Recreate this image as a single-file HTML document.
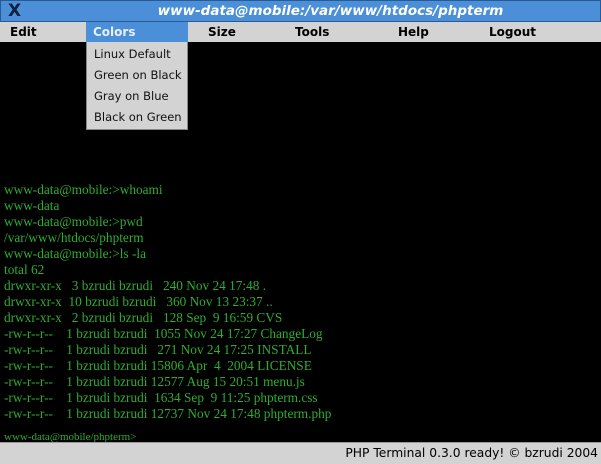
<!DOCTYPE html>
<html><head><style>
*{margin:0;padding:0;box-sizing:border-box}
body{width:601px;height:464px;background:#000;position:relative;overflow:hidden;font-family:"DejaVu Sans",sans-serif}
#title{position:absolute;left:0;top:0;width:601px;height:22px;background:#4a8fd8;border:1px solid #2a5a90}
#title .x{position:absolute;left:7px;top:0px;font:bold 17px "DejaVu Sans",sans-serif;color:#102040}
#title .t{position:absolute;left:0;width:100%;top:2px;text-align:center;padding-left:60px;font:italic bold 13.5px "DejaVu Sans",sans-serif;color:#fff}
#menu{position:absolute;left:0;top:22px;width:601px;height:20px;background:#d3d3d3}
#sel{position:absolute;left:86px;top:22px;width:102px;height:20px;background:#4a8fd8}
#dd{position:absolute;left:86px;top:42px;width:102px;height:88px;background:#d3d3d3;border:1px solid #888;border-top:none}
#dd div{height:21px;padding-left:7px;padding-top:5px;font:11.5px "DejaVu Sans",sans-serif;color:#111}
#term{position:absolute;left:4px;top:182px;font:13.3px "Liberation Serif",serif;color:#2fae2f;line-height:16px;white-space:pre}
#prompt{position:absolute;left:4px;top:431px;font:11px "Liberation Serif",serif;color:#2fae2f}
#status{position:absolute;left:0;top:442px;width:601px;height:22px;background:#d3d3d3;border-top:1px solid #999;text-align:right;padding-right:3px;padding-top:3px;font:12.3px "DejaVu Sans",sans-serif;color:#000}
</style></head><body>
<div id="title"><span class="x">X</span><div class="t">www-data@mobile:/var/www/htdocs/phpterm</div></div>
<div id="menu"></div>
<div id="sel"></div>
<div style="position:absolute;top:22px;left:0;width:601px;height:20px">
<span style="position:absolute;left:10px;top:3px;font:bold 12px 'DejaVu Sans';">Edit</span>
<span style="position:absolute;left:93px;top:3px;font:bold 12px 'DejaVu Sans';color:#e8f0ff">Colors</span>
<span style="position:absolute;left:208px;top:3px;font:bold 12px 'DejaVu Sans';">Size</span>
<span style="position:absolute;left:295px;top:3px;font:bold 12px 'DejaVu Sans';">Tools</span>
<span style="position:absolute;left:398px;top:3px;font:bold 12px 'DejaVu Sans';">Help</span>
<span style="position:absolute;left:489px;top:3px;font:bold 12px 'DejaVu Sans';">Logout</span>
</div>
<div id="dd"><div>Linux Default</div><div>Green on Black</div><div>Gray on Blue</div><div>Black on Green</div></div>
<div id="term">www-data@mobile:&gt;whoami
www-data
www-data@mobile:&gt;pwd
/var/www/htdocs/phpterm
www-data@mobile:&gt;ls -la
total 62
drwxr-xr-x   3 bzrudi bzrudi   240 Nov 24 17:48 .
drwxr-xr-x  10 bzrudi bzrudi   360 Nov 13 23:37 ..
drwxr-xr-x   2 bzrudi bzrudi   128 Sep  9 16:59 CVS
-rw-r--r--    1 bzrudi bzrudi  1055 Nov 24 17:27 ChangeLog
-rw-r--r--    1 bzrudi bzrudi   271 Nov 24 17:25 INSTALL
-rw-r--r--    1 bzrudi bzrudi 15806 Apr  4  2004 LICENSE
-rw-r--r--    1 bzrudi bzrudi 12577 Aug 15 20:51 menu.js
-rw-r--r--    1 bzrudi bzrudi  1634 Sep  9 11:25 phpterm.css
-rw-r--r--    1 bzrudi bzrudi 12737 Nov 24 17:48 phpterm.php</div>
<div id="prompt">www-data@mobile/phpterm&gt;</div>
<div id="status">PHP Terminal 0.3.0 ready! © bzrudi 2004</div>
</body></html>
